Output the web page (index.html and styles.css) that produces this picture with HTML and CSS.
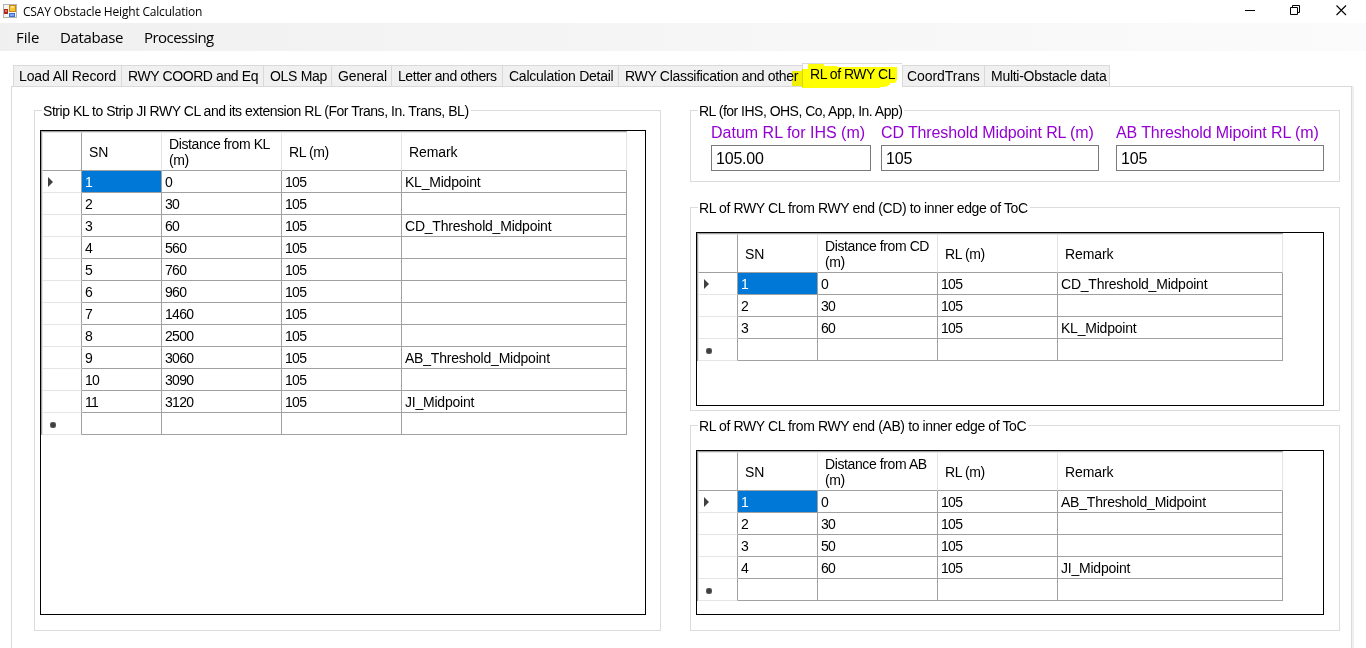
FILE: index.html
```html
<!DOCTYPE html>
<html lang="en">
<head>
<meta charset="utf-8">
<title>CSAY Obstacle Height Calculation</title>
<link rel="stylesheet" href="styles.css">
</head>
<body>
<header class="titlebar">
  <svg class="app-icon" width="14" height="14" viewBox="0 0 14 14" shape-rendering="crispEdges">
    <rect x="0.5" y="0.5" width="13" height="13" fill="#f4f4f4" stroke="#b4b4b4"/>
    <rect x="1" y="5" width="4" height="5" fill="#b3261e"/>
    <rect x="2" y="6" width="2" height="2" fill="#e5756a"/>
    <rect x="6" y="1" width="7" height="7" fill="#c98a10"/>
    <rect x="7" y="2" width="5" height="5" fill="#fbc62f"/>
    <rect x="8" y="2" width="3" height="2" fill="#ffe48a"/>
    <rect x="6" y="9" width="6" height="4" fill="#3b6fd8"/>
    <rect x="7" y="10" width="4" height="2" fill="#7fa8f5"/>
  </svg>
  <span class="title">CSAY Obstacle Height Calculation</span>
  <svg class="win-buttons" width="104" height="12" viewBox="0 0 104 12" fill="none" stroke="#000">
    <path d="M0 6.5H10"/>
    <path d="M45.5 3.5H52.5V10.500H45.5ZM47.500 3.500V1.500H54.500V8.500H52.500"/>
    <path d="M91.500 1.500L101 11M101 1.500L91.500 11" stroke-width="1.100"/>
  </svg>
</header>
<nav class="menubar">
  <span class="menu-file">File</span><span class="menu-db">Database</span><span class="menu-proc">Processing</span>
</nav>
<div class="tabs">
  <div class="tab t-load">Load All Record</div>
  <div class="tab t-coord">RWY COORD and Eq</div>
  <div class="tab t-ols">OLS Map</div>
  <div class="tab t-general">General</div>
  <div class="tab t-letter">Letter and others</div>
  <div class="tab t-calc">Calculation Detail</div>
  <div class="tab t-class">RWY Classification and other</div>
  <div class="tab t-rl selected">RL of RWY CL
    <svg class="marker" width="106" height="25" viewBox="0 0 106 25"><path d="M0 7H10V5H16V0H32V2H45V3H105V16L103 19H98V21H96V22L92 23H88V24H10V22H0Z" fill="#ff0"/></svg>
  </div>
  <div class="tab t-trans">CoordTrans</div>
  <div class="tab t-multi">Multi-Obstacle data</div>
</div>
<main class="page">
  <section class="group strip">
    <div class="legend lg-strip">Strip KL to Strip JI RWY CL and its extension RL (For Trans, In. Trans, BL)</div>
    <div class="grid">
      <div class="table">
        <div class="row head"><i></i><b class="sn">SN</b><b>Distance from KL<br>(m)</b><b>RL (m)</b><b class="rem">Remark</b></div>
        <div class="row"><i class="current"></i><span class="active">1</span><span>0</span><span>105</span><span class="rem">KL_Midpoint</span></div>
        <div class="row"><i></i><span>2</span><span>30</span><span>105</span><span></span></div>
        <div class="row"><i></i><span>3</span><span>60</span><span>105</span><span class="rem">CD_Threshold_Midpoint</span></div>
        <div class="row"><i></i><span>4</span><span>560</span><span>105</span><span></span></div>
        <div class="row"><i></i><span>5</span><span>760</span><span>105</span><span></span></div>
        <div class="row"><i></i><span>6</span><span>960</span><span>105</span><span></span></div>
        <div class="row"><i></i><span>7</span><span>1460</span><span>105</span><span></span></div>
        <div class="row"><i></i><span>8</span><span>2500</span><span>105</span><span></span></div>
        <div class="row"><i></i><span>9</span><span>3060</span><span>105</span><span class="rem">AB_Threshold_Midpoint</span></div>
        <div class="row"><i></i><span>10</span><span>3090</span><span>105</span><span></span></div>
        <div class="row"><i></i><span>11</span><span>3120</span><span>105</span><span class="rem">JI_Midpoint</span></div>
        <div class="row"><i class="new"></i><span></span><span></span><span></span><span></span></div>
      </div>
    </div>
  </section>
  <div class="right">
    <section class="group datum">
      <div class="legend lg-datum">RL (for IHS, OHS, Co, App, In. App)</div>
      <div class="fields">
        <label class="f-ihs">Datum RL for IHS (m)<input value="105.00"></label>
        <label class="f-cd">CD Threshold Midpoint RL (m)<input value="105"></label>
        <label class="f-ab">AB Threshold Mipoint RL (m)<input value="105"></label>
      </div>
    </section>
    <section class="group cd">
      <div class="legend lg-toc">RL of RWY CL from RWY end (CD) to inner edge of ToC</div>
      <div class="grid">
        <div class="table">
          <div class="row head"><i></i><b class="sn">SN</b><b>Distance from CD<br>(m)</b><b>RL (m)</b><b class="rem">Remark</b></div>
          <div class="row"><i class="current"></i><span class="active">1</span><span>0</span><span>105</span><span class="rem">CD_Threshold_Midpoint</span></div>
          <div class="row"><i></i><span>2</span><span>30</span><span>105</span><span></span></div>
          <div class="row"><i></i><span>3</span><span>60</span><span>105</span><span class="rem">KL_Midpoint</span></div>
          <div class="row"><i class="new"></i><span></span><span></span><span></span><span></span></div>
        </div>
      </div>
    </section>
    <section class="group ab">
      <div class="legend lg-toc">RL of RWY CL from RWY end (AB) to inner edge of ToC</div>
      <div class="grid">
        <div class="table">
          <div class="row head"><i></i><b class="sn">SN</b><b>Distance from AB<br>(m)</b><b>RL (m)</b><b class="rem">Remark</b></div>
          <div class="row"><i class="current"></i><span class="active">1</span><span>0</span><span>105</span><span class="rem">AB_Threshold_Midpoint</span></div>
          <div class="row"><i></i><span>2</span><span>30</span><span>105</span><span></span></div>
          <div class="row"><i></i><span>3</span><span>50</span><span>105</span><span></span></div>
          <div class="row"><i></i><span>4</span><span>60</span><span>105</span><span class="rem">JI_Midpoint</span></div>
          <div class="row"><i class="new"></i><span></span><span></span><span></span><span></span></div>
        </div>
      </div>
    </section>
  </div>
</main>
</body>
</html>
```
FILE: styles.css
```css
* { box-sizing: border-box; }
body {
  margin: 0;
  height: 648px;
  overflow: hidden;
  display: flex;
  flex-direction: column;
  background: #fff;
  color: #000;
  font: 14px/16px "Liberation Sans", Arial, sans-serif;
  white-space: nowrap;
}

/* Window chrome */
.titlebar { height: 23px; flex: none; display: flex; padding: 4px 17px 0 3px; }
.app-icon { flex: none; }
.title { margin-left: 6px; font: 12px/16px "Open Sans", "Noto Sans", sans-serif; letter-spacing: -0.19px; }
.win-buttons { margin-left: auto; }
.menubar {
  height: 28px;
  flex: none;
  display: flex;
  padding: 4px 0 0 16px;
  background: linear-gradient(90deg, #f0f0f0, #fbfbfb);
  font: 15px/21px "Open Sans", "Noto Sans", sans-serif;
}
.menu-file { width: 44px; letter-spacing: -0.1px; }
.menu-db { width: 84px; letter-spacing: -0.38px; }
.menu-proc { letter-spacing: -0.55px; }

/* Tab strip */
.tabs { height: 35px; flex: none; display: flex; align-items: flex-end; padding-left: 13px; }
.tab {
  height: 21px;
  padding: 2px 0 0 6px;
  background: #f0f0f0;
  border: solid #d9d9d9;
  border-width: 1px 0 0 1px;
}
.t-load { width: 108px; padding-left: 5px; letter-spacing: -0.11px; }
.t-coord { width: 142px; letter-spacing: -0.4px; }
.t-ols { width: 68px; letter-spacing: -0.3px; }
.t-general { width: 60px; letter-spacing: -0.13px; }
.t-letter { width: 111px; letter-spacing: -0.43px; }
.t-calc { width: 116px; letter-spacing: -0.25px; }
.t-class { width: 184px; letter-spacing: -0.3px; }
.t-rl { width: 100px; padding-left: 7px; letter-spacing: -0.48px; }
.t-trans { width: 82px; padding-left: 4px; letter-spacing: -0.06px; }
.t-multi { width: 126px; border-right-width: 1px; letter-spacing: -0.27px; }
.tab.selected { position: relative; height: 24px; margin-bottom: -1px; background: #fff; }
.marker { position: absolute; left: -11px; top: 0; mix-blend-mode: multiply; }

/* Tab page */
.page {
  flex: 1;
  display: flex;
  margin: 0 14px 0 11px;
  border: solid #d9d9d9;
  border-width: 1px 1px 0 1px;
  box-shadow: 2px 0 #f0f0f0;
  padding: 23px 0 0 22px;
}
.group { flex: none; border: 1px solid #dcdcdc; padding-left: 5px; }
.legend { width: max-content; height: 16px; margin: -8px 0 0 2px; padding: 0 2px 0 1px; background: #fff; }
.strip { width: 627px; height: 521px; }
.right { flex: none; margin-left: 29px; width: 650px; }
.datum { height: 72px; }
.cd { height: 204px; margin-top: 25px; }
.ab { height: 206px; margin-top: 14px; }
.lg-strip { letter-spacing: -0.46px; }
.lg-datum { letter-spacing: -0.51px; }
.lg-toc { letter-spacing: -0.39px; }

/* Datum fields */
.fields { display: flex; padding: 5px 0 0 15px; font-size: 16px; line-height: 18px; color: #9400d3; }
.fields label { display: flex; flex-direction: column; gap: 3px; }
.fields input {
  height: 26px;
  width: 100%;
  border: 1px solid #7a7a7a;
  padding: 1px 0 0 4px;
  font: 16px "Liberation Sans", Arial, sans-serif;
  letter-spacing: -0.2px;
  color: #000;
}
.f-ihs { width: 160px; margin-right: 10px; }
.f-cd { width: 218px; margin-right: 17px; letter-spacing: -0.12px; }
.f-ab { width: 208px; letter-spacing: -0.1px; }

/* Data grids */
.grid { border: 1px solid #000; margin-top: 11px; }
.strip .grid { width: 606px; height: 485px; }
.cd .grid, .ab .grid { width: 628px; margin-top: 16px; }
.cd .grid { height: 174px; }
.ab .grid { height: 165px; }
.table { width: 586px; border-left: 1px solid #a0a0a0; }
.row { display: grid; grid-template-columns: 40px 80px 120px 120px 225px; height: 22px; }
.row > * { border: solid #a0a0a0; border-width: 0 1px 1px 0; font-style: normal; font-weight: normal; }
.row span { padding: 4px 0 0 3px; line-height: 15px; letter-spacing: -0.7px; }
.row i { display: flex; align-items: center; border-left: 1px solid #e5e5e5; border-bottom-color: #e5e5e5; }
.row .rem { letter-spacing: -0.22px; }
.row .active { background: #0078d7; color: #fff; }
.head { height: 40px; border-top: 1px solid #a0a0a0; }
.head b { padding-left: 7px; display: flex; align-items: center; line-height: 16px; letter-spacing: -0.4px; border-right-color: #e5e5e5; }
.head > * { border-top: 1px solid #e5e5e5; }
.head i { border-bottom-color: #a0a0a0; }
.head .sn { letter-spacing: -0.2px; }
.head .rem { letter-spacing: -0.1px; }
.current::before { content: ""; margin-left: 5px; border: 5px solid transparent; border-left-color: #404040; border-right: 0; }
.new::before { content: ""; margin: 3px 0 0 7px; width: 6px; height: 6px; border-radius: 2px; background: radial-gradient(#404040 40%, #888); }
```
